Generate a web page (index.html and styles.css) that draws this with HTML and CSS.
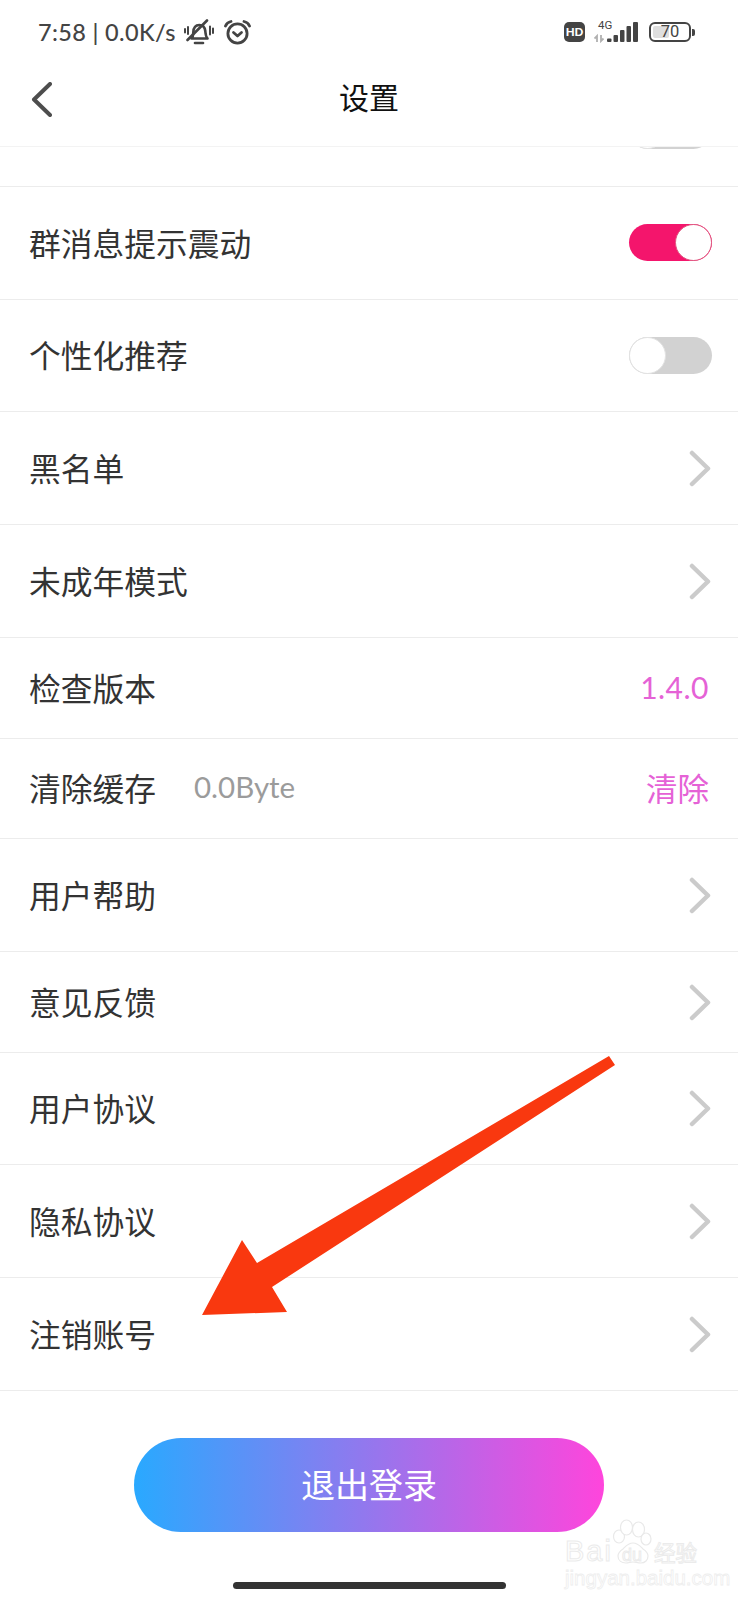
FILE: index.html
```html
<!DOCTYPE html>
<html lang="zh-CN">
<head>
<meta charset="utf-8">
<title>设置</title>
<link rel="stylesheet" href="styles.css">
</head>
<body>
<div class="phone">
  <div class="status">
    <div class="status-left">
      <span class="time">7:58 | 0.0K/s</span>
      <svg class="ic-bell" viewBox="0 0 30 26" fill="none" stroke="#444" stroke-width="2.600" stroke-linecap="round" stroke-linejoin="round">
        <path d="M7.500 19.500c1.800-1.800 1.700-3.800 1.800-6.200.2-4.400 2.400-7.300 6-7.300 3.600 0 5.600 2.500 6 6 .3 3.200.3 5.600 2.200 7.500z"/>
        <path d="M11 24h8"/>
        <path d="M3.500 21 23 1.500"/>
        <path d="M1 10v3.500M4 8v7M26 7.500v8M29 9.500v4.500" stroke-width="2"/>
      </svg>
      <svg class="ic-alarm" viewBox="0 0 27 25" fill="none" stroke="#444" stroke-width="2.800" stroke-linecap="round" stroke-linejoin="round">
        <circle cx="13.500" cy="13.500" r="9.600"/>
        <path d="M1.500 6C2.500 3.500 4.500 2 7 1.500M25.500 6C24.500 3.500 22.500 2 20 1.500"/>
        <path d="M9.500 12.500l4 3.500 4-3.500"/>
      </svg>
    </div>
    <div class="status-right">
      <span class="hd">HD</span>
      <div class="net">
        <span class="net-4g">4G</span>
        <svg class="ic-signal" viewBox="0 0 45 22">
          <path d="M3 21v-6l-2.500 2.500M7 14v6l2.500-2.500" fill="none" stroke="#b0b0b0" stroke-width="1.800"/>
          <rect x="13" y="17.500" width="4.500" height="3.500" rx="1" fill="#444"/>
          <rect x="19.500" y="14" width="4.500" height="7" rx="1" fill="#444"/>
          <rect x="26" y="9" width="4.500" height="12" rx="1" fill="#444"/>
          <rect x="32.500" y="5" width="4.500" height="16" rx="1" fill="#444"/>
          <rect x="39" y="1" width="5" height="20" rx="1" fill="#444"/>
        </svg>
      </div>
      <div class="battery"><span class="battery-fill"></span><span class="battery-num">70</span></div>
      <span class="battery-nub"></span>
    </div>
  </div>

  <header class="nav">
    <svg class="back" viewBox="0 0 21 35" fill="none" stroke="#4d4d4d" stroke-width="4" stroke-linecap="round" stroke-linejoin="round"><path d="M19 2 3 17.500 19 33"/></svg>
    <h1 class="title">设置</h1>
  </header>

  <main class="list">
    <div class="row row-clip"><span class="toggle toggle-off toggle-clipped"><span class="knob"></span></span></div>
    <div class="row"><span class="label">群消息提示震动</span><span class="toggle toggle-on"><span class="knob"></span></span></div>
    <div class="row row-n"><span class="label">个性化推荐</span><span class="toggle toggle-off"><span class="knob"></span></span></div>
    <div class="row"><span class="label">黑名单</span><svg class="chev" viewBox="0 0 22 37" fill="none" stroke="#cbcbcb" stroke-width="4.500" stroke-linecap="round" stroke-linejoin="round"><path d="M3 3 19 18.500 3 34"/></svg></div>
    <div class="row"><span class="label">未成年模式</span><svg class="chev" viewBox="0 0 22 37" fill="none" stroke="#cbcbcb" stroke-width="4.500" stroke-linecap="round" stroke-linejoin="round"><path d="M3 3 19 18.500 3 34"/></svg></div>
    <div class="row row-m"><span class="label">检查版本</span><span class="value value-num">1.4.0</span></div>
    <div class="row row-s"><span class="label">清除缓存</span><span class="size">0.0Byte</span><span class="value">清除</span></div>
    <div class="row"><span class="label">用户帮助</span><svg class="chev" viewBox="0 0 22 37" fill="none" stroke="#cbcbcb" stroke-width="4.500" stroke-linecap="round" stroke-linejoin="round"><path d="M3 3 19 18.500 3 34"/></svg></div>
    <div class="row row-m"><span class="label">意见反馈</span><svg class="chev" viewBox="0 0 22 37" fill="none" stroke="#cbcbcb" stroke-width="4.500" stroke-linecap="round" stroke-linejoin="round"><path d="M3 3 19 18.500 3 34"/></svg></div>
    <div class="row row-n"><span class="label">用户协议</span><svg class="chev" viewBox="0 0 22 37" fill="none" stroke="#cbcbcb" stroke-width="4.500" stroke-linecap="round" stroke-linejoin="round"><path d="M3 3 19 18.500 3 34"/></svg></div>
    <div class="row"><span class="label">隐私协议</span><svg class="chev" viewBox="0 0 22 37" fill="none" stroke="#cbcbcb" stroke-width="4.500" stroke-linecap="round" stroke-linejoin="round"><path d="M3 3 19 18.500 3 34"/></svg></div>
    <div class="row"><span class="label">注销账号</span><svg class="chev" viewBox="0 0 22 37" fill="none" stroke="#cbcbcb" stroke-width="4.500" stroke-linecap="round" stroke-linejoin="round"><path d="M3 3 19 18.500 3 34"/></svg></div>
  </main>

  <div class="logout-wrap"><button class="logout">退出登录</button></div>
  <div class="home-wrap"><span class="home"></span></div>

  <svg class="arrow" viewBox="0 0 738 1600"><polygon fill="#f9380f" points="609,1056 615,1065 272,1287 287,1312 202,1315 242,1240 257,1263"/></svg>

  <div class="watermark">
    <svg class="paw" viewBox="0 0 45 48" fill="#fff" stroke="#e9e9e9" stroke-width="1.200">
      <ellipse cx="9" cy="18.500" rx="5.500" ry="6.500"/>
      <ellipse cx="16.500" cy="9.500" rx="6" ry="7.500"/>
      <ellipse cx="28.500" cy="11.500" rx="6" ry="7.500"/>
      <ellipse cx="36" cy="21" rx="5" ry="6"/>
      <path d="M23 25c-5 0-7 3-10 6-3 2-5 4-5 7 0 5 4 7 8 7 3 0 4-1 7-1s4 1 8 1c4 0 7-3 7-7 0-3-2-5-5-7-3-3-5-6-10-6z"/>
    </svg>
    <div class="wm-main"><span class="wm-bai">Bai</span><span class="wm-du">du</span><span class="wm-cn">经验</span></div>
    <div class="wm-url">jingyan.baidu.com</div>
  </div>
</div>
</body>
</html>
```

FILE: styles.css
```css
* { box-sizing: border-box; }
html, body { margin: 0; padding: 0; background: #fff; }
.phone {
  position: relative;
  width: 738px;
  height: 1600px;
  overflow: hidden;
  background: #fff;
  font-family: "Noto Sans CJK SC", "Noto Sans", sans-serif;
  color: #333;
}

.status {
  height: 64px;
  display: flex;
  justify-content: space-between;
  align-items: flex-start;
  padding: 19px 43px 0 38px;
}
.status-left { display: flex; align-items: center; height: 26px; }
.time {
  font-family: Lato, "Noto Sans", sans-serif;
  font-size: 23.500px;
  font-weight: 500;
  line-height: 26px;
  color: #444;
  letter-spacing: 0.350px;
  white-space: nowrap;
}
.ic-bell { width: 30px; height: 26px; margin-left: 8px; }
.ic-alarm { width: 27px; height: 25px; margin-left: 10px; }
.status-right { display: flex; align-items: flex-start; padding-top: 3px; }
.hd {
  width: 21px;
  height: 20px;
  border-radius: 5px;
  background: #444;
  color: #fff;
  font-family: Lato, sans-serif;
  font-size: 11.500px;
  font-weight: 900;
  line-height: 20px;
  text-align: center;
}
.net { position: relative; width: 45px; height: 20px; margin-left: 9px; }
.net-4g {
  position: absolute;
  left: 4px;
  top: -2px;
  font-family: Roboto, sans-serif;
  font-size: 11.500px;
  line-height: 11px;
  color: #444;
}
.ic-signal { position: absolute; left: 0; top: -1px; width: 45px; height: 22px; }
.battery {
  position: relative;
  width: 42px;
  height: 20px;
  margin-left: 10px;
  border: 2.500px solid #444;
  border-radius: 6px;
  overflow: hidden;
}
.battery-fill { position: absolute; left: 2px; top: 2px; bottom: 2px; width: 16px; background: #dedede; border-radius: 2px; }
.battery-num {
  position: relative;
  display: block;
  text-align: center;
  font-family: Roboto, sans-serif;
  font-size: 16.500px;
  line-height: 15px;
  color: #444;
}
.battery-nub { width: 3px; height: 7px; margin: 7px 0 0 1px; background: #444; border-radius: 0 2px 2px 0; }

.nav {
  position: relative;
  z-index: 1;
  height: 83px;
  display: flex;
  align-items: center;
  justify-content: center;
  background: #fff;
  border-bottom: 1px solid #f3f3f3;
}
.back { position: absolute; left: 31px; top: 18px; width: 21px; height: 35px; }
.title {
  margin: 0;
  font-size: 30px;
  font-weight: 400;
  line-height: 40px;
  color: #111;
  position: relative;
  top: -9px;
}

.row {
  height: 113px;
  display: flex;
  align-items: center;
  padding: 0 29px;
  border-bottom: 1px solid #ececec;
}
.row-s { height: 100px; }
.row-m { height: 101px; }
.row-n { height: 112px; }
.row-clip { height: 40px; align-items: flex-start; justify-content: flex-end; overflow: visible; }
.label { font-size: 31.750px; line-height: 44px; margin-bottom: 3px; color: #333; white-space: nowrap; }
.toggle {
  position: relative;
  display: block;
  margin-left: auto;
  margin-bottom: 2px;
  width: 83px;
  height: 37px;
  margin-right: -3px;
  border-radius: 19px;
  flex: none;
}
.row-n .toggle { margin-bottom: 0; }
.toggle-on { background: #f4156c; }
.toggle-off { background: #d2d2d2; }
.toggle-clipped { margin-top: -35px; margin-bottom: 0; }
.knob {
  position: absolute;
  top: 0;
  width: 37px;
  height: 37px;
  border-radius: 50%;
  background: #fff;
}
.toggle-on .knob { right: 0; border: 1px solid #e0557f; }
.toggle-off .knob { left: 0; border: 1px solid #e2e2e2; }
.chev { width: 22px; height: 37px; margin-left: auto; margin-right: -2px; flex: none; }
.value { margin-left: auto; font-size: 31.500px; line-height: 44px; margin-bottom: 3px; color: #e562d6; }
.value-num { font-family: Lato, sans-serif; font-size: 30px; letter-spacing: 0.500px; }
.size { margin-left: 38px; font-family: Lato, sans-serif; font-size: 29.500px; line-height: 44px; margin-bottom: 3px; color: #9b9b9b; }

.logout-wrap { display: flex; justify-content: center; padding-top: 47px; }
.logout {
  width: 470px;
  height: 94px;
  border: 0;
  border-radius: 47px;
  background: linear-gradient(90deg, #29a9ff, #ff45dc);
  color: #fff;
  font-family: inherit;
  font-size: 34px;
  line-height: 44px;
  padding: 0 0 3px;
}
.home-wrap { display: flex; justify-content: center; padding-top: 50px; }
.home { width: 273px; height: 7px; border-radius: 4px; background: #333; }

.arrow { position: absolute; left: 0; top: 0; width: 738px; height: 1600px; pointer-events: none; }

.watermark { position: absolute; left: 565px; top: 1518px; width: 135px; height: 76px; }
.paw { position: absolute; left: 45px; top: 0; width: 45px; height: 48px; }
.wm-main {
  position: absolute;
  left: 0;
  top: 20px;
  display: flex;
  align-items: baseline;
  line-height: 26px;
  color: #fff;
  -webkit-text-stroke: 1px #ebebeb;
  white-space: nowrap;
}
.wm-bai { font-family: "Liberation Sans", sans-serif; font-size: 29px; letter-spacing: 2px; width: 48px; }
.wm-du { font-family: "Liberation Sans", sans-serif; font-size: 18px; margin-left: 9px; width: 23px; }
.wm-cn { font-size: 21.500px; margin-left: 9px; }
.wm-url {
  position: absolute;
  left: 0;
  top: 48px;
  font-family: "Liberation Sans", sans-serif;
  font-size: 20.500px;
  line-height: 24px;
  color: #fff;
  -webkit-text-stroke: 0.800px #eeeeee;
  white-space: nowrap;
}
```
